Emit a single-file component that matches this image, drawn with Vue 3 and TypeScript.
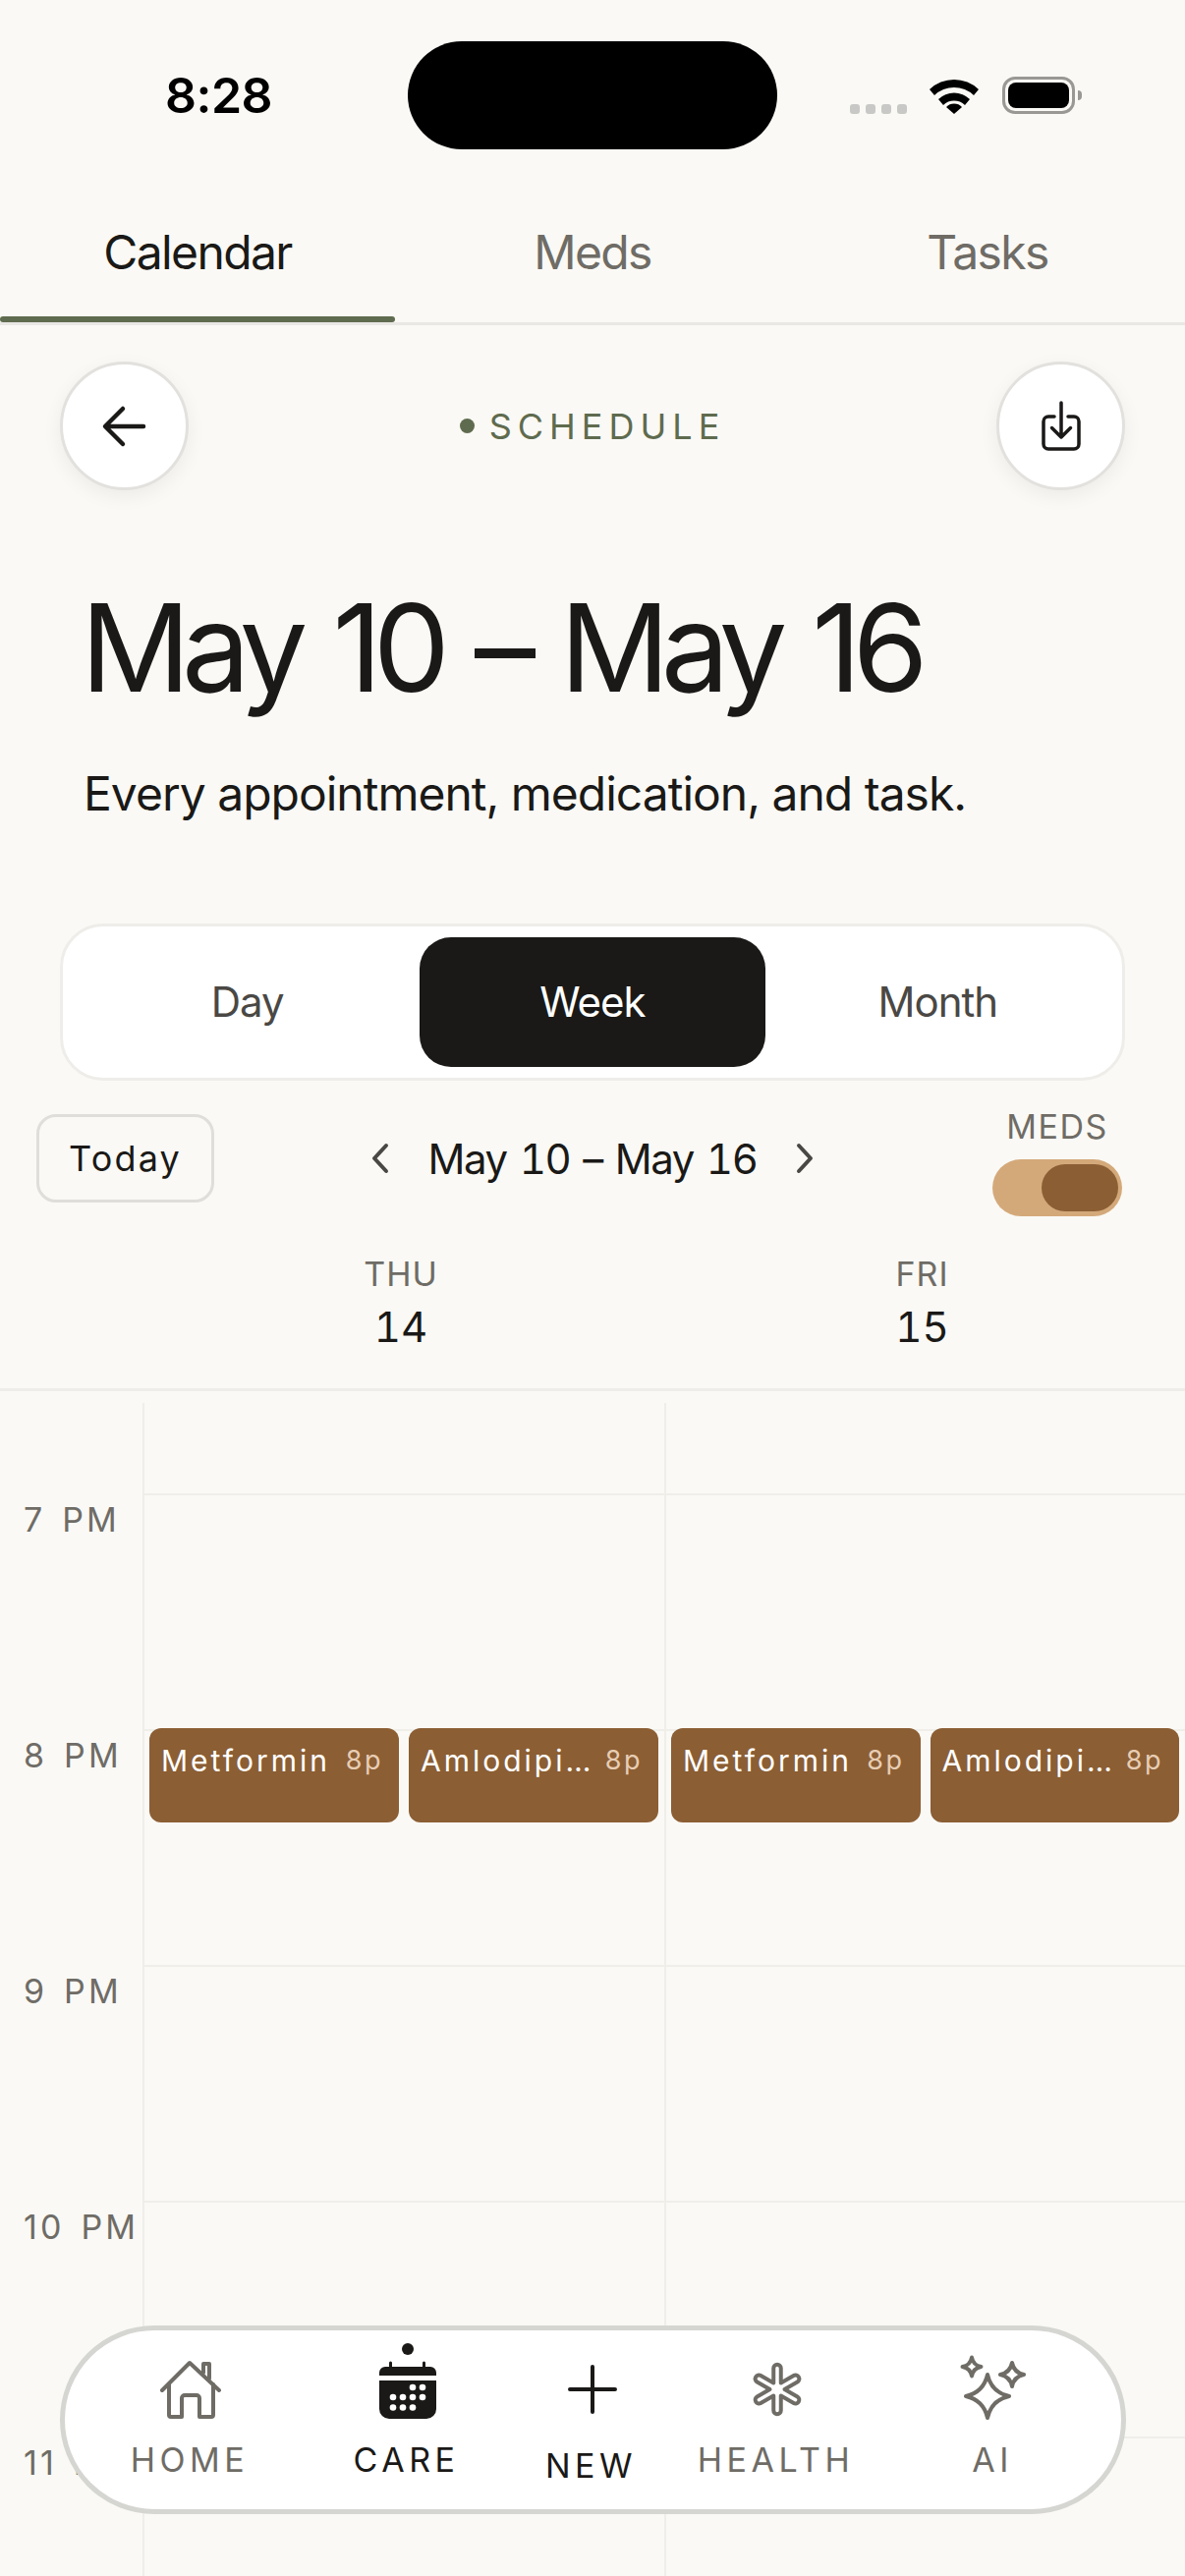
<template>
  <div class="screen">
    <div class="status-bar">
      <span class="clock">8:28</span>
      <div class="island"></div>
      <div class="status-icons">
        <div class="signal"><i></i><i></i><i></i><i></i></div>
        <svg class="wifi" width="52" height="38" viewBox="0 0 52 38">
          <path d="M1 13 A36 36 0 0 1 51 13 L46 19 A29 29 0 0 0 6 19 Z" fill="#000" />
          <path d="M10 23 A23 23 0 0 1 42 23 L37 29 A16 16 0 0 0 15 29 Z" fill="#000" />
          <path d="M18 31 A11 11 0 0 1 34 31 L26 38 Z" fill="#000" />
        </svg>
        <div class="battery"><div class="battery-fill"></div></div>
        <div class="battery-nub"></div>
      </div>
    </div>

    <div class="tabs">
      <div v-for="t in tabs" :key="t" class="tab" :class="{ active: t === 'Calendar' }">{{ t }}</div>
    </div>

    <div class="top-row">
      <button class="round-btn">
        <svg width="48" height="48" viewBox="0 0 48 48" fill="none" stroke="#1a1917" stroke-width="4.500" stroke-linecap="round" stroke-linejoin="round">
          <path d="M43 24 H5 M22 6 L4 24 L22 42" />
        </svg>
      </button>
      <div class="eyebrow"><span class="eyebrow-dot"></span>SCHEDULE</div>
      <button class="round-btn">
        <svg width="48" height="56" viewBox="0 0 48 56" fill="none" stroke="#1a1917" stroke-width="3.500" stroke-linecap="round" stroke-linejoin="round">
          <path d="M17 18 H11 a5 5 0 0 0 -5 5 V46 a5 5 0 0 0 5 5 H37 a5 5 0 0 0 5 -5 V23 a5 5 0 0 0 -5 -5 H31" />
          <path d="M24 4 V39 M14.500 29.500 L24 39 L33.500 29.500" />
        </svg>
      </button>
    </div>

    <h1 class="title">May 10 – May 16</h1>
    <p class="subtitle">Every appointment, medication, and task.</p>

    <div class="segment">
      <div v-for="v in views" :key="v" class="segment-item" :class="{ active: v === 'Week' }">{{ v }}</div>
    </div>

    <div class="toolbar">
      <button class="today">Today</button>
      <div class="date-nav">
        <svg width="20" height="32" viewBox="0 0 20 32" fill="none" stroke="#4a4844" stroke-width="4" stroke-linecap="round" stroke-linejoin="round">
          <path d="M16 3 L4 16 L16 29" />
        </svg>
        <span class="date-range">May 10 – May 16</span>
        <svg width="20" height="32" viewBox="0 0 20 32" fill="none" stroke="#4a4844" stroke-width="4" stroke-linecap="round" stroke-linejoin="round">
          <path d="M4 3 L16 16 L4 29" />
        </svg>
      </div>
      <div class="meds-toggle">
        <span class="meds-label">MEDS</span>
        <div class="toggle"><div class="toggle-thumb"></div></div>
      </div>
    </div>

    <div class="week-head">
      <div v-for="d in days" :key="d.name" class="day-head">
        <div class="day-name">{{ d.name }}</div>
        <div class="day-num">{{ d.num }}</div>
      </div>
    </div>

    <div class="grid">
      <div class="row first">
        <div class="hour"></div>
        <div class="cell"></div>
        <div class="cell"></div>
      </div>
      <div v-for="h in hours" :key="h" class="row">
        <div class="hour">{{ h }}</div>
        <div v-for="d in days" :key="d.name" class="cell lined">
          <div v-if="h === '8 PM'" class="events">
            <div v-for="m in meds" :key="m" class="event">
              <span class="event-name">{{ m }}</span>
              <span class="event-time">8p</span>
            </div>
          </div>
        </div>
      </div>
    </div>

    <nav class="bottom-nav">
      <div class="nav-item">
        <div class="nav-icon">
          <svg width="64" height="64" viewBox="0 0 64 64" fill="none" stroke="#6f6c66" stroke-width="4" stroke-linecap="round" stroke-linejoin="round">
            <path d="M4 33 L32 5 L62 33" />
            <path d="M11 27 V58 a2 2 0 0 0 2 2 H24 V41 a3 3 0 0 1 3 -3 H39 a3 3 0 0 1 3 3 V60 H54 a2 2 0 0 0 2 -2 V27" />
            <path d="M46 15 V6 H52 V21" />
          </svg>
        </div>
        <span class="nav-label">HOME</span>
      </div>
      <div class="nav-item current">
        <div class="nav-icon">
          <span class="care-dot"></span>
          <svg width="60" height="60" viewBox="0 0 60 60">
            <path d="M1 13 a6 6 0 0 1 6 -6 H11 V3 a1.500 1.500 0 0 1 3 0 V7 H45 V3 a1.500 1.500 0 0 1 3 0 V7 H53 a6 6 0 0 1 6 6 V16 H1 Z" fill="#1a1917" />
            <path d="M1 21 H59 V50 a10 10 0 0 1 -10 10 H11 a10 10 0 0 1 -10 -10 Z" fill="#1a1917" />
            <g fill="#fff">
              <circle cx="35" cy="28" r="3.300" /><circle cx="45" cy="28" r="3.300" />
              <circle cx="15" cy="38" r="3.300" /><circle cx="25" cy="38" r="3.300" /><circle cx="35" cy="38" r="3.300" /><circle cx="45" cy="38" r="3.300" />
              <circle cx="15" cy="48.500" r="3.300" /><circle cx="25" cy="48.500" r="3.300" /><circle cx="35" cy="48.500" r="3.300" />
            </g>
          </svg>
        </div>
        <span class="nav-label nudge">CARE</span>
      </div>
      <div class="nav-item current">
        <div class="nav-icon">
          <svg width="52" height="52" viewBox="0 0 52 52" fill="none" stroke="#1a1917" stroke-width="4" stroke-linecap="round">
            <path d="M26 3 V49 M3 26 H49" />
          </svg>
        </div>
        <span class="nav-label new nudge">NEW</span>
      </div>
      <div class="nav-item">
        <div class="nav-icon">
          <svg width="60" height="60" viewBox="0 0 60 60" fill="none" stroke="#6f6c66" stroke-width="4" stroke-linejoin="round">
            <path d="M26.250 8.500 A3.750 3.750 0 0 1 33.750 8.500 L33.750 23.500 L46.750 16 A3.750 3.750 0 0 1 50.500 22.500 L37.500 30 L50.500 37.500 A3.750 3.750 0 0 1 46.750 44 L33.750 36.500 L33.750 51.500 A3.750 3.750 0 0 1 26.250 51.500 L26.250 36.500 L13.250 44 A3.750 3.750 0 0 1 9.500 37.500 L22.500 30 L9.500 22.500 A3.750 3.750 0 0 1 13.250 16 L26.250 23.500 Z" />
          </svg>
        </div>
        <span class="nav-label nudge">HEALTH</span>
      </div>
      <div class="nav-item">
        <div class="nav-icon">
          <svg width="80" height="72" viewBox="6 0 80 72" fill="none" stroke="#6f6c66" stroke-width="4" stroke-linejoin="round">
            <path d="M41 21 Q45 39 63 43 Q45 47 41 65 Q37 47 19 43 Q37 39 41 21 Z" />
            <path d="M25 3.500 Q26.500 11.500 34.500 13 Q26.500 14.500 25 22.500 Q23.500 14.500 15.500 13 Q23.500 11.500 25 3.500 Z" />
            <path d="M66 9 Q68 19 78 21 Q68 23 66 33 Q64 23 54 21 Q64 19 66 9 Z" />
          </svg>
        </div>
        <span class="nav-label">AI</span>
      </div>
    </nav>
  </div>
</template>

<script setup lang="ts">
const tabs = ['Calendar', 'Meds', 'Tasks']
const views = ['Day', 'Week', 'Month']
const days = [
  { name: 'THU', num: 14 },
  { name: 'FRI', num: 15 },
]
const hours = ['7 PM', '8 PM', '9 PM', '10 PM', '11 PM']
const meds = ['Metformin', 'Amlodipine']
</script>

<style>
html,
body {
  margin: 0;
  background: #faf9f5;
}
</style>

<style scoped>
.screen {
  position: relative;
  width: 1206px;
  height: 2622px;
  overflow: hidden;
  background: #faf9f5;
  color: #1a1917;
  font-family: Inter, "Liberation Sans", sans-serif;
}

.status-bar {
  display: flex;
  align-items: center;
  height: 110px;
  padding: 42px 0;
}
.clock {
  width: 385px;
  padding-left: 30px;
  text-align: center;
  font-size: 50px;
  font-weight: 600;
  letter-spacing: -0.500px;
  color: #000;
}
.island {
  width: 376px;
  height: 110px;
  border-radius: 55px;
  background: #000;
}
.status-icons {
  display: flex;
  align-items: center;
  margin-left: 74px;
  height: 38px;
}
.signal {
  display: flex;
  gap: 6px;
  align-self: flex-end;
}
.signal i {
  display: block;
  width: 10px;
  height: 10px;
  border-radius: 3px;
  background: #c8c8c6;
}
.wifi {
  margin-left: 22px;
}
.battery {
  box-sizing: border-box;
  width: 74px;
  height: 38px;
  margin-left: 23px;
  padding: 3px;
  border: 3px solid #999895;
  border-radius: 13px;
}
.battery-fill {
  height: 100%;
  border-radius: 8px;
  background: #000;
}
.battery-nub {
  width: 4px;
  height: 10px;
  margin-left: 3px;
  border-radius: 0 4px 4px 0;
  background: #999895;
}

.tabs {
  display: flex;
  border-bottom: 3px solid #e9e8e4;
}
.tab {
  position: relative;
  flex: 1;
  height: 101px;
  padding-top: 33px;
  line-height: 60px;
  text-align: center;
  font-size: 48px;
  letter-spacing: -1.600px;
  color: #6f6c66;
}
.tab.active {
  color: #1a1917;
}
.tab.active::after {
  content: "";
  position: absolute;
  left: 0;
  right: 0;
  bottom: 0;
  height: 6px;
  border-radius: 3px;
  background: #5f6b4e;
}

.top-row {
  display: flex;
  align-items: center;
  justify-content: space-between;
  margin-top: 37px;
  padding: 0 61px;
}
.round-btn {
  display: flex;
  align-items: center;
  justify-content: center;
  box-sizing: border-box;
  width: 131px;
  height: 131px;
  padding: 0;
  border: 3px solid #e2e1de;
  border-radius: 50%;
  background: #fff;
  box-shadow: 0 6px 20px rgba(26, 25, 23, 0.06);
}
.eyebrow {
  display: flex;
  align-items: center;
  font-size: 36px;
  letter-spacing: 6px;
  color: #5f6b4e;
}
.eyebrow-dot {
  width: 15px;
  height: 15px;
  margin-right: 15px;
  border-radius: 50%;
  background: #5f6b4e;
}

.title {
  margin: 95px 0 0;
  padding-left: 82px;
  font-size: 124px;
  line-height: 130px;
  font-weight: 400;
  letter-spacing: -9px;
  word-spacing: 8px;
}
.subtitle {
  margin: 54px 0 0;
  padding-left: 85px;
  font-size: 48px;
  line-height: 60px;
  letter-spacing: -1px;
}

.segment {
  display: flex;
  box-sizing: border-box;
  height: 160px;
  margin: 102px 61px 0;
  padding: 11px 12px;
  border: 3px solid #eeede9;
  border-radius: 44px;
  background: #fff;
}
.segment-item {
  flex: 1;
  line-height: 132px;
  text-align: center;
  font-size: 42px;
  letter-spacing: -1px;
  color: #4a4844;
  border-radius: 32px;
}
.segment-item.active {
  background: #1a1917;
  color: #fff;
}

.toolbar {
  display: grid;
  grid-template-columns: 181px 1fr 132px;
  margin-top: 34px;
  padding-left: 37px;
  padding-right: 64px;
  height: 104px;
}
.today {
  box-sizing: border-box;
  height: 90px;
  padding: 0;
  border: 3px solid #dfdedb;
  border-radius: 20px;
  background: transparent;
  font-family: inherit;
  font-size: 36px;
  letter-spacing: 2.200px;
  color: #1a1917;
}
.date-nav {
  display: flex;
  align-items: center;
  justify-content: center;
  gap: 38px;
  height: 90px;
  padding-right: 22px;
}
.date-range {
  font-size: 42px;
  font-variant-numeric: tabular-nums;
  letter-spacing: -1.400px;
  word-spacing: 3px;
}
.meds-toggle {
  display: flex;
  flex-direction: column;
  align-items: center;
}
.meds-label {
  margin-top: -9px;
  line-height: 44px;
  font-size: 34px;
  letter-spacing: 1.500px;
  color: #6f6c66;
}
.toggle {
  box-sizing: border-box;
  width: 132px;
  height: 58px;
  margin-top: 11px;
  padding: 5px 4px;
  border-radius: 29px;
  background: #d4a97a;
}
.toggle-thumb {
  width: 78px;
  height: 48px;
  margin-left: auto;
  border-radius: 24px;
  background: #8b5e34;
}

.week-head {
  display: grid;
  grid-template-columns: 531px 530px;
  padding: 37px 0 37px 145px;
  border-bottom: 3px solid #eeede9;
}
.day-head {
  padding-right: 5px;
  text-align: center;
}
.day-name {
  line-height: 44px;
  font-size: 34px;
  letter-spacing: 1px;
  color: #6f6c66;
}
.day-num {
  margin-top: 7px;
  line-height: 50px;
  font-size: 42px;
  font-variant-numeric: tabular-nums;
}

.grid {
  margin-top: 12px;
}
.row {
  display: grid;
  grid-template-columns: 145px 531px 530px;
  height: 240px;
}
.row.first {
  height: 92px;
}
.hour {
  padding: 9px 0 0 24px;
  line-height: 36px;
  font-size: 34px;
  letter-spacing: 3.200px;
  word-spacing: 4px;
  white-space: nowrap;
  color: #6f6c66;
}
.cell {
  position: relative;
  border-left: 2px solid #efeee9;
}
.cell.lined {
  border-top: 2px solid #efeee9;
}
.events {
  position: absolute;
  top: -3px;
  left: 5px;
  right: 6px;
  display: flex;
  gap: 10px;
}
.event {
  flex: 1;
  min-width: 0;
  box-sizing: border-box;
  display: flex;
  gap: 10px;
  height: 96px;
  padding: 15px 16px 0 12px;
  border-radius: 12px;
  background: #8b5e34;
  line-height: 36px;
  color: #fff;
}
.event-name {
  flex: 1;
  min-width: 0;
  overflow: hidden;
  text-overflow: ellipsis;
  white-space: nowrap;
  font-size: 30px;
  letter-spacing: 3px;
}
.event-time {
  font-size: 27px;
  letter-spacing: 2.500px;
  color: #e8cdb4;
}

.bottom-nav {
  position: absolute;
  left: 61px;
  top: 2367px;
  box-sizing: border-box;
  display: grid;
  grid-template-columns: 250px 194px 182px 194px 244px;
  width: 1085px;
  height: 192px;
  padding: 28px 0 0 2px;
  border: 5px solid #d5d5d2;
  border-radius: 96px;
  background: #fff;
}
.nav-item {
  display: flex;
  flex-direction: column;
  align-items: center;
  color: #6f6c66;
}
.nav-item.current {
  color: #1a1917;
}
.nav-icon {
  position: relative;
  display: flex;
  align-items: center;
  justify-content: center;
  height: 64px;
}
.care-dot {
  position: absolute;
  top: -15px;
  left: 50%;
  width: 12px;
  height: 12px;
  margin-left: -6px;
  border-radius: 50%;
  background: #1a1917;
}
.nav-label {
  margin-top: 18px;
  line-height: 44px;
  font-size: 34px;
  letter-spacing: 4.500px;
}
.nav-label.nudge {
  margin-right: 3px;
}
.nav-label.new {
  margin-top: 24px;
}
</style>
